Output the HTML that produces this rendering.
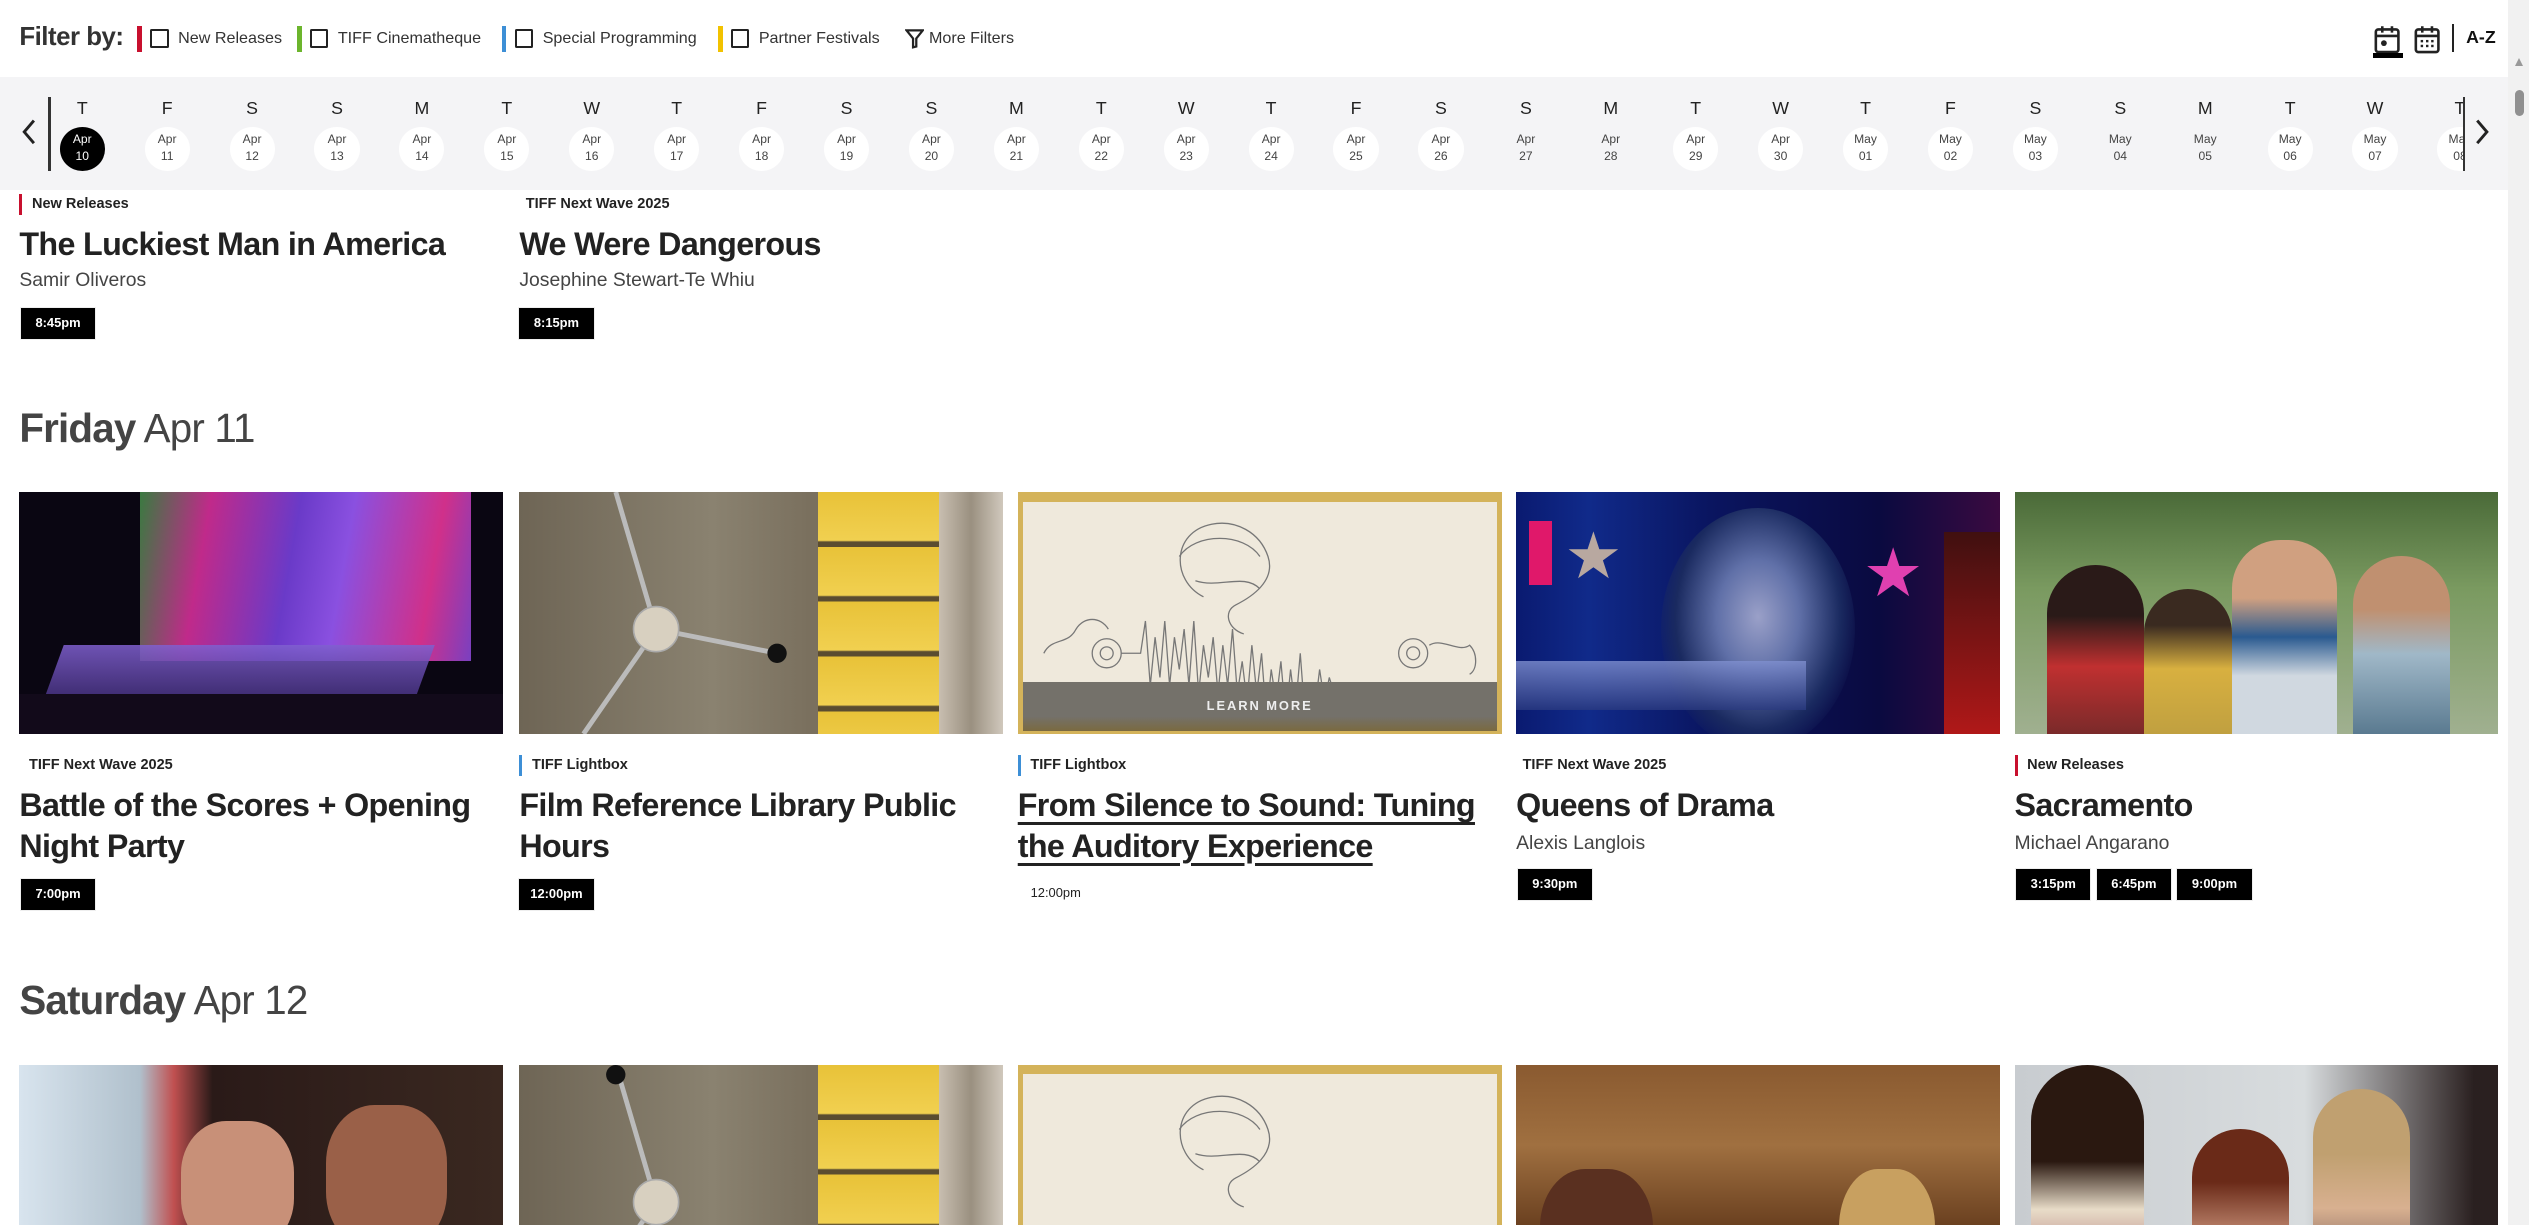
<!DOCTYPE html>
<html><head><meta charset="utf-8"><style>
html,body{margin:0;padding:0;background:#fff;overflow:hidden;width:2529px;height:1225px}
#r{zoom:1.6129;width:1568px;height:760px;position:relative;overflow:hidden;font-family:"Liberation Sans",sans-serif;color:#222}
.a{position:absolute}
.fl{position:absolute;top:16px;font-size:10px;color:#333;display:flex;align-items:center;height:16px}
.fl .bar{width:3px;height:16px;margin-right:5px}
.fl .cb{width:9px;height:9px;border:1.3px solid #222;border-radius:1px;margin-right:6px}
#strip{position:absolute;left:0;top:48px;width:1555px;height:70px;background:#f4f4f6}
.d{position:absolute;width:28px;text-align:center}
.d .l{font-size:11px;color:#222;position:absolute;top:13px;width:28px}
.d .c{position:absolute;top:31px;width:28px;height:27px;border-radius:50%;background:#fff;font-size:7.5px;line-height:11px;color:#444;padding-top:2px;box-sizing:border-box}
.d .c.n{background:transparent}
.d .c.s{background:#000;color:#fff}
.cat{position:absolute;font-size:9px;font-weight:bold;color:#222;height:13px;line-height:13px;padding-left:6px}
.cat.r{border-left:2px solid #c8102e}
.cat.b{border-left:2px solid #3d8fd6}
.t{position:absolute;font-size:20px;font-weight:bold;color:#222;letter-spacing:-.4px;line-height:25px;width:300px}
.sub{position:absolute;font-size:12px;color:#444}
.tm{position:absolute;display:flex;gap:4px}
.tm span{display:block;background:#000;color:#fff;font-size:8px;font-weight:bold;width:46px;height:19px;line-height:19px;text-align:center;outline:1px solid #eee}
.h{position:absolute;left:12px;font-size:25px;color:#444;letter-spacing:-.5px}
.img{position:absolute;width:300px;height:150px;overflow:hidden}
.img.s{height:100px}
</style></head><body><div id="r">
<div class="a" style="left:12px;top:14px;font-size:16px;font-weight:bold;color:#333;letter-spacing:-.3px">Filter by:</div>
<div class="fl" style="left:85px"><div class="bar" style="background:#c8102e"></div><div class="cb"></div>New Releases</div>
<div class="fl" style="left:184px"><div class="bar" style="background:#6cb52d"></div><div class="cb"></div>TIFF Cinematheque</div>
<div class="fl" style="left:311px"><div class="bar" style="background:#3d8fd6"></div><div class="cb"></div>Special Programming</div>
<div class="fl" style="left:445px"><div class="bar" style="background:#f2c200"></div><div class="cb"></div>Partner Festivals</div>
<div class="fl" style="left:561px"><svg width="12" height="13" viewBox="0 0 12 13" style="margin-right:3px"><path d="M1 1.5h10L7 6.5v5L5 12V6.5z" fill="none" stroke="#222" stroke-width="1.4"/></svg>More Filters</div>
<svg class="a" style="left:1470px;top:14px" width="20" height="20" viewBox="0 0 20 20"><rect x="3" y="4" width="14" height="14" rx="1.5" fill="none" stroke="#222" stroke-width="1.6"/><path d="M3 8h14M7 2v4M13 2v4" stroke="#222" stroke-width="1.6"/><circle cx="8" cy="12.5" r="1.8" fill="#222"/></svg>
<div class="a" style="left:1471px;top:33px;width:19px;height:3px;background:#000"></div>
<svg class="a" style="left:1495px;top:14px" width="20" height="20" viewBox="0 0 20 20"><rect x="3" y="4" width="14" height="14" rx="1.5" fill="none" stroke="#222" stroke-width="1.6"/><path d="M3 8h14M7 2v4M13 2v4" stroke="#222" stroke-width="1.6"/><g fill="#222"><rect x="6" y="10.5" width="1.5" height="1.5"/><rect x="9.3" y="10.5" width="1.5" height="1.5"/><rect x="12.5" y="10.5" width="1.5" height="1.5"/><rect x="6" y="13.5" width="1.5" height="1.5"/><rect x="9.3" y="13.5" width="1.5" height="1.5"/><rect x="12.5" y="13.5" width="1.5" height="1.5"/></g></svg>
<div class="a" style="left:1520px;top:15px;width:1.5px;height:17px;background:#222"></div>
<div class="a" style="left:1529px;top:17px;font-size:11px;font-weight:bold;color:#111">A-Z</div>
<div class="a" style="left:1555px;top:0;width:13px;height:760px;background:#f1f1f1"></div>
<div class="a" style="left:1559px;top:56px;width:6px;height:16px;border-radius:3px;background:#909090"></div>
<div class="a" style="left:1559px;top:36px;width:0;height:0;border-left:3px solid transparent;border-right:3px solid transparent;border-bottom:5px solid #999"></div>
<div id="strip">
<svg class="a" style="left:13px;top:26px" width="10" height="16" viewBox="0 0 10 16"><path d="M8 1L2 8l6 7" fill="none" stroke="#222" stroke-width="1.8"/></svg>
<div class="a" style="left:30px;top:12px;width:1.5px;height:46px;background:#333"></div>
<div class="a" style="left:31px;top:0;width:1496px;height:70px;overflow:hidden" id="days"></div>
<div class="a" style="left:1527px;top:12px;width:1.5px;height:46px;background:#333"></div>
<svg class="a" style="left:1534px;top:26px" width="10" height="16" viewBox="0 0 10 16"><path d="M2 1l6 7-6 7" fill="none" stroke="#222" stroke-width="1.8"/></svg>
</div>

<div class="cat r" style="left:12px;top:120px">New Releases</div>
<div class="t" style="left:12px;top:139px">The Luckiest Man in America</div>
<div class="sub" style="left:12px;top:167px">Samir Oliveros</div>
<div class="tm" style="left:13px;top:191px"><span>8:45pm</span></div>
<div class="cat" style="left:320px;top:120px">TIFF Next Wave 2025</div>
<div class="t" style="left:322px;top:139px">We Were Dangerous</div>
<div class="sub" style="left:322px;top:167px">Josephine Stewart-Te Whiu</div>
<div class="tm" style="left:322px;top:191px"><span>8:15pm</span></div>

<div class="h" style="top:251px"><b>Friday</b> Apr 11</div>

<div class="img" style="left:12px;top:305px;background:#0a0612">
<div class="a" style="left:75px;top:0;width:205px;height:105px;background:linear-gradient(100deg,#3a7a40 0%,#c02a8a 20%,#6a3ac8 45%,#8a50e0 60%,#d0308a 85%,#7a40c0 100%)"></div>
<div class="a" style="left:20px;top:95px;width:230px;height:40px;background:linear-gradient(#8060d0,#3a2870);transform:skewX(-20deg);opacity:.85"></div>
<div class="a" style="left:0;top:125px;width:300px;height:25px;background:#120a1a"></div>
</div>
<div class="img" style="left:322px;top:305px;background:linear-gradient(90deg,#6e6555 0%,#8a8270 40%,#7a705e 60%)">
<div class="a" style="left:185px;top:0;width:75px;height:150px;background:repeating-linear-gradient(180deg,#e8c238 0,#f1d050 30px,#5a4c30 31px,#5a4c30 34px)"></div>
<div class="a" style="left:260px;top:0;width:40px;height:150px;background:linear-gradient(90deg,#c8beb0,#9a9080,#d0c8bc)"></div>
<svg class="a" style="left:0;top:0" width="185" height="150"><path d="M60 0L85 85M85 85L40 150M85 85L160 100" stroke="#bbb" stroke-width="3"/><circle cx="85" cy="85" r="14" fill="#d8d0c0" stroke="#aaa"/><circle cx="160" cy="100" r="6" fill="#111"/></svg>
</div>
<div class="img" style="left:631px;top:305px;background:#d4b35a">
<div class="a" style="left:3px;top:6px;width:294px;height:141px;background:#efe9dc"></div>
<svg class="a" style="left:0;top:0" width="300" height="150"><g fill="none" stroke="#777" stroke-width=".8"><path d="M115 65c-20-10-20-40 5-45 15-3 30 5 35 20 5 15-10 25-20 30-8 4-5 15 5 18"/><path d="M100 40c10-15 40-15 50 0M110 55c15 5 30-5 40 5"/><path d="M16 100c5-10 15-5 20-15 5-8 15-8 20 0"/><circle cx="55" cy="100" r="9"/><circle cx="55" cy="100" r="4"/><circle cx="245" cy="100" r="9"/><circle cx="245" cy="100" r="4"/><path d="M255 95c8-5 18 5 25 0 5 5 5 15 0 18"/><path d="M64 100h12l3-20 3 40 3-30 3 25 3-35 3 40 3-30 3 20 3-25 3 35 3-40 3 45 3-30 3 20 3-25 3 35 3-30 3 25 3-35 3 40 3-20 3 25 3-35 3 30 3-25 3 40 3-30 3 20 3-25 3 35 3-30 3 25 3-35 3 40 3-20 3 15 3-25 3 20 3-15 3 10h10"/></g></svg>
<div class="a" style="left:3px;top:118px;width:294px;height:30px;background:linear-gradient(#74716a 70%,#7a6a40);color:#eee;font-size:8px;font-weight:bold;letter-spacing:1.2px;text-align:center;line-height:30px">LEARN MORE</div>
</div>
<div class="img" style="left:940px;top:305px;background:linear-gradient(90deg,#0a1a70 0%,#102a8a 15%,#0a1560 40%,#0a0a40 75%,#3a0a40 100%)">
<div class="a" style="left:90px;top:10px;width:120px;height:150px;border-radius:50%;background:radial-gradient(ellipse at 50% 45%,#9aa0c8 0%,#6070a8 30%,#1a2a60 60%,transparent 75%)"></div>
<div class="a" style="left:0;top:105px;width:180px;height:30px;background:linear-gradient(#8090d0,#2a3a80);opacity:.8"></div>
<div class="a" style="left:8px;top:18px;width:14px;height:40px;background:#e0186a"></div>
<div class="a" style="left:265px;top:25px;width:35px;height:125px;background:linear-gradient(#401010,#b01818)"></div>
<div class="a" style="left:215px;top:30px;color:#e040b0;font-size:42px;line-height:1">★</div>
<div class="a" style="left:30px;top:20px;color:#b8a8a0;font-size:40px;line-height:1">★</div>
</div>
<div class="img" style="left:1249px;top:305px;background:linear-gradient(#4a6a38,#7a9a60 40%,#a0b090)">
<div class="a" style="left:20px;top:45px;width:60px;height:105px;border-radius:30px 30px 0 0;background:linear-gradient(#2a1a18 30%,#c03030 60%,#7a2a2a)"></div>
<div class="a" style="left:80px;top:60px;width:55px;height:90px;border-radius:28px 28px 0 0;background:linear-gradient(#3a2a20 25%,#d8b040 55%,#c0a040)"></div>
<div class="a" style="left:135px;top:30px;width:65px;height:120px;border-radius:30px 30px 0 0;background:linear-gradient(#d0a080 30%,#2a5a90 50%,#d0d8e0 70%)"></div>
<div class="a" style="left:210px;top:40px;width:60px;height:110px;border-radius:30px 30px 0 0;background:linear-gradient(#c09070 30%,#a0b8c8 55%,#5a7a90)"></div>
</div>

<div class="cat" style="left:12px;top:468px">TIFF Next Wave 2025</div>
<div class="t" style="left:12px;top:487px">Battle of the Scores + Opening Night Party</div>
<div class="tm" style="left:13px;top:545px"><span>7:00pm</span></div>
<div class="cat b" style="left:322px;top:468px">TIFF Lightbox</div>
<div class="t" style="left:322px;top:487px">Film Reference Library Public Hours</div>
<div class="tm" style="left:322px;top:545px"><span>12:00pm</span></div>
<div class="cat b" style="left:631px;top:468px">TIFF Lightbox</div>
<div class="t" style="left:631px;top:487px;text-decoration:underline;text-decoration-thickness:2px;text-underline-offset:4px">From Silence to Sound: Tuning the Auditory Experience</div>
<div class="a" style="left:639px;top:549px;font-size:8px;color:#222">12:00pm</div>
<div class="cat" style="left:938px;top:468px">TIFF Next Wave 2025</div>
<div class="t" style="left:940px;top:487px">Queens of Drama</div>
<div class="sub" style="left:940px;top:516px">Alexis Langlois</div>
<div class="tm" style="left:941px;top:539px"><span>9:30pm</span></div>
<div class="cat r" style="left:1249px;top:468px">New Releases</div>
<div class="t" style="left:1249px;top:487px">Sacramento</div>
<div class="sub" style="left:1249px;top:516px">Michael Angarano</div>
<div class="tm" style="left:1250px;top:539px"><span>3:15pm</span><span>6:45pm</span><span>9:00pm</span></div>

<div class="h" style="top:606px"><b>Saturday</b> Apr 12</div>

<div class="img s" style="left:12px;top:660px;background:linear-gradient(90deg,#d8e4ee 0%,#b0c0cc 25%,#c05050 32%,#2a1a18 40%,#3a2820 100%)">
<div class="a" style="left:100px;top:35px;width:70px;height:80px;border-radius:40%;background:#c89078"></div>
<div class="a" style="left:190px;top:25px;width:75px;height:90px;border-radius:40%;background:#9a6048"></div>
</div>
<div class="img s" style="left:322px;top:660px;background:linear-gradient(90deg,#6e6555 0%,#8a8270 40%,#7a705e 60%)">
<div class="a" style="left:185px;top:0;width:75px;height:150px;background:repeating-linear-gradient(180deg,#e8c238 0,#f1d050 30px,#5a4c30 31px,#5a4c30 34px)"></div>
<div class="a" style="left:260px;top:0;width:40px;height:150px;background:linear-gradient(90deg,#c8beb0,#9a9080,#d0c8bc)"></div>
<svg class="a" style="left:0;top:0" width="185" height="100"><path d="M60 0L85 85M85 85L40 150" stroke="#bbb" stroke-width="3"/><circle cx="60" cy="6" r="6" fill="#111"/><circle cx="85" cy="85" r="14" fill="#d8d0c0" stroke="#aaa"/></svg>
</div>
<div class="img s" style="left:631px;top:660px;background:#d4b35a">
<div class="a" style="left:3px;top:6px;width:294px;height:144px;background:#efe9dc"></div>
<svg class="a" style="left:0;top:0" width="300" height="100"><g fill="none" stroke="#777" stroke-width=".8"><path d="M115 65c-20-10-20-40 5-45 15-3 30 5 35 20 5 15-10 25-20 30-8 4-5 15 5 18"/><path d="M100 40c10-15 40-15 50 0M110 55c15 5 30-5 40 5"/></g></svg>
</div>
<div class="img s" style="left:940px;top:660px;background:linear-gradient(#8a5a30,#a07040 50%,#6a4020)">
<div class="a" style="left:15px;top:65px;width:70px;height:90px;border-radius:40%;background:#5a3020"></div>
<div class="a" style="left:200px;top:65px;width:60px;height:90px;border-radius:40%;background:#c8a060"></div>
</div>
<div class="img s" style="left:1249px;top:660px;background:linear-gradient(90deg,#c8ccd0,#d8dcde 60%,#2a2020 95%)">
<div class="a" style="left:10px;top:0;width:70px;height:150px;border-radius:35px 35px 0 0;background:linear-gradient(#2a1810 40%,#e8dcc8 60%,#8a3040)"></div>
<div class="a" style="left:110px;top:40px;width:60px;height:110px;border-radius:30px 30px 0 0;background:linear-gradient(#6a2a18 30%,#c08870 60%,#3a2028)"></div>
<div class="a" style="left:185px;top:15px;width:60px;height:135px;border-radius:30px 30px 0 0;background:linear-gradient(#c0a070 30%,#d8b090 55%,#3a2a3a)"></div>
</div>
</div>
<script>
var L=["T","F","S","S","M","T","W"],c=document.getElementById("days"),h="";
var ds=[];for(var i=10;i<=30;i++)ds.push(["Apr",String(i)]);for(var j=1;j<=8;j++)ds.push(["May","0"+j]);
var nc={"Apr 27":1,"Apr 28":1,"May 04":1,"May 05":1};
for(var k=0;k<ds.length;k++){var x=51+52.65*k-14-31;var key=ds[k][0]+" "+ds[k][1];
var cls=k==0?"c s":(nc[key]?"c n":"c");
h+='<div class="d" style="left:'+x+'px;top:0"><div class="l">'+L[k%7]+'</div><div class="'+cls+'">'+ds[k][0]+'<br>'+ds[k][1]+'</div></div>';}
c.innerHTML=h;
</script>
</body></html>
